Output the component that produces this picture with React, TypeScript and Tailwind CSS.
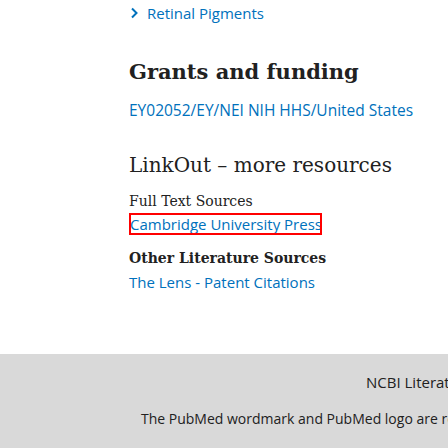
import React from 'react';

const sans = "[font-family:'Open_Sans',sans-serif]";
const serif = "[font-family:'DejaVu_Serif',serif]";

const App: React.FC = () => {
  return (
    <div className="w-[448px] h-[448px] overflow-hidden bg-white flex flex-col">
      <div className="pl-[129px] whitespace-nowrap flex flex-col">
        {/* similar articles toggle */}
        <div className={`h-[26px] flex items-center gap-[8px] text-[15px] text-[#0071bc] ${sans}`}>
          <svg width="9" height="12" viewBox="0 0 9 12" className="ml-[1px]">
            <path d="M2 1.5 L6.5 6 L2 10.5" fill="none" stroke="#0071bc" strokeWidth="2" />
          </svg>
          <span>Retinal Pigments</span>
        </div>

        <h2 className={`mt-[33px] h-[26px] flex items-center text-[21px] font-bold text-[#212121] ${serif}`}>
          Grants and funding
        </h2>
        <div className={`mt-[14px] h-[24px] flex items-center text-[15.5px] text-[#0071bc] ${sans}`}>
          EY02052/EY/NEI NIH HHS/United States
        </div>

        <h2 className={`mt-[29px] h-[26px] flex items-center text-[20px] text-[#212121] ${serif}`}>
          LinkOut – more resources
        </h2>
        <h3 className={`mt-[13px] h-[20px] flex items-center text-[14px] text-[#212121] ${serif}`}>
          Full Text Sources
        </h3>
        <div className="mt-[2px] w-[193px] h-[22px] border-2 border-[#ff0000] overflow-hidden flex items-center">
          <span className={`-ml-[1px] text-[15px] text-[#0071bc] ${sans}`}>Cambridge University Press</span>
        </div>

        <h3 className={`mt-[13px] h-[20px] flex items-center text-[14px] font-bold text-[#212121] ${serif}`}>
          Other Literature Sources
        </h3>
        <div className={`mt-[3px] h-[22px] flex items-center text-[15px] text-[#0071bc] ${sans}`}>
          The Lens - Patent Citations
        </div>
      </div>

      <footer className={`mt-auto h-[94px] bg-[#d9d9d9] whitespace-nowrap flex flex-col text-[#212121] ${sans}`}>
        <div className="mt-[18px] h-[20px] pl-[366px] flex items-center text-[15px]">
          NCBI Literature Resources
        </div>
        <div className="mt-[16px] h-[20px] pl-[141px] flex items-center text-[14px]">
          The PubMed wordmark and PubMed logo are registered trademarks of the U.S. Department of Health and Human Services (HHS).
        </div>
      </footer>
    </div>
  );
};

export default App;
